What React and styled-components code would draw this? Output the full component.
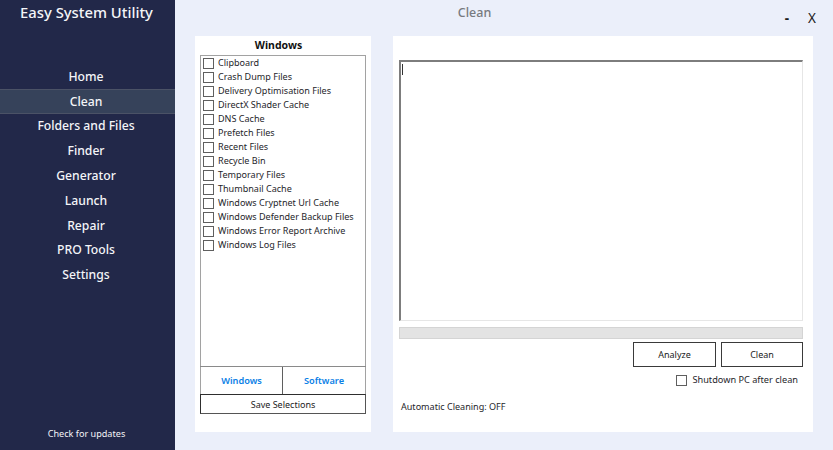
import React from 'react';
import styled, { createGlobalStyle } from 'styled-components';

const GlobalStyle = createGlobalStyle`
  html, body {
    margin: 0;
    padding: 0;
    overflow: hidden;
  }
  * {
    box-sizing: border-box;
  }
`;

const Window = styled.div`
  width: 833px;
  height: 450px;
  display: flex;
  background: #ebeffa;
  font-family: "Noto Sans", "Open Sans", sans-serif;
  color: #222;
`;

const Sidebar = styled.aside`
  width: 175px;
  height: 100%;
  flex: none;
  display: flex;
  flex-direction: column;
  background: #222849;
  color: #f4f5f8;
`;

const Brand = styled.div`
  height: 64px;
  padding: 1px 2px 0 0;
  text-align: center;
  font-size: 14.8px;
  font-weight: 500;
  line-height: 23px;
`;

const Nav = styled.nav`
  display: flex;
  flex-direction: column;
`;

const NavItem = styled.div`
  height: 24.8px;
  padding-right: 3px;
  display: flex;
  align-items: center;
  justify-content: center;
  font-size: 12.2px;
  font-weight: 500;
  background: ${(p) => (p.$active ? '#36425a' : 'transparent')};
  box-shadow: ${(p) => (p.$active ? 'inset 0 1px 0 #4b5266, inset 0 -1px 0 #4b5266' : 'none')};
`;

const UpdateLink = styled.div`
  margin-top: auto;
  padding: 0 2px 9px 0;
  text-align: center;
  font-size: 9.1px;
  line-height: 14px;
`;

const Main = styled.main`
  flex: 1;
  display: flex;
  flex-direction: column;
  padding: 0 20px 18px;
`;

const Header = styled.header`
  height: 36px;
  flex: none;
  position: relative;
  text-align: center;
  padding: 4px 59px 0 0;
  font-size: 12.5px;
  font-weight: 500;
  line-height: 18px;
  color: #777a80;
`;

const WindowControls = styled.div`
  position: absolute;
  top: 9px;
  right: -3px;
  display: flex;
  gap: 19px;
  font-size: 13.5px;
  line-height: 18px;
  font-weight: 400;
  color: #1b1b1b;
`;

const Minimize = styled.span`
  font-weight: 700;
`;

const Panels = styled.div`
  flex: 1;
  min-height: 0;
  display: flex;
  gap: 22px;
`;

const ListPanel = styled.section`
  width: 176px;
  flex: none;
  display: flex;
  flex-direction: column;
  padding: 2px 5px 18px;
  background: #fff;
`;

const ListTitle = styled.div`
  height: 17px;
  padding-right: 9px;
  text-align: center;
  font-size: 10.5px;
  line-height: 15px;
  font-weight: 700;
  color: #111;
`;

const ListBox = styled.div`
  flex: 1;
  min-height: 0;
  display: flex;
  flex-direction: column;
  padding: 0 0 0 2px;
  border: 1px solid #a2a2a2;
  border-bottom: none;
`;

const CheckRow = styled.label`
  height: 14px;
  display: flex;
  align-items: center;
  gap: 4px;
  font-size: 9.05px;
  line-height: 14px;
  color: #1e1e2a;
  white-space: nowrap;
`;

const Box = styled.span`
  width: 11px;
  height: 11px;
  flex: none;
  margin-top: 1px;
  border: 1px solid #5f5f5f;
  background: #fff;
`;

const TabRow = styled.div`
  height: 28px;
  flex: none;
  display: flex;
  border-top: 1px solid #8a8a8a;
`;

const TabButton = styled.div`
  width: ${(p) => p.$width}px;
  display: flex;
  align-items: center;
  justify-content: center;
  font-size: 9.2px;
  font-weight: 600;
  color: #0a80e6;
  border-left: 1px solid #a2a2a2;
  border-right: 1px solid ${(p) => (p.$first ? '#5f5f5f' : '#a2a2a2')};
  & + & {
    border-left: none;
  }
`;

const SaveButton = styled.div`
  height: 20px;
  flex: none;
  display: flex;
  align-items: center;
  justify-content: center;
  font-size: 9px;
  color: #1b1b1b;
  border: 1px solid #2e2e2e;
  border-right-color: #555;
  border-bottom-color: #555;
`;

const OutputPanel = styled.section`
  flex: 1;
  min-width: 0;
  display: flex;
  flex-direction: column;
  padding: 24px 10px 17px 6px;
  background: #fff;
`;

const OutputBox = styled.div`
  height: 261px;
  flex: none;
  padding: 2px 0 0 1px;
  border-top: 2px solid #7d7d7d;
  border-left: 2px solid #7d7d7d;
  border-right: 1px solid #e6e6e6;
  border-bottom: 1px solid #e6e6e6;
`;

const Caret = styled.div`
  width: 1px;
  height: 11px;
  background: #333;
`;

const Progress = styled.div`
  height: 12px;
  flex: none;
  margin-top: 6px;
  background: #e3e3e3;
  border: 1px solid #d4d4d4;
`;

const ActionRow = styled.div`
  display: flex;
  justify-content: flex-end;
  gap: 5px;
  margin-top: 3px;
`;

const ActionButton = styled.div`
  width: ${(p) => p.$width}px;
  height: 25px;
  display: flex;
  align-items: center;
  justify-content: center;
  font-size: 9px;
  color: #1b1b1b;
  border: 1px solid #3a3a3a;
  border-right-width: 1.5px;
  border-bottom-width: 1.5px;
`;

const ShutdownRow = styled(CheckRow)`
  justify-content: flex-end;
  padding-right: 5px;
  margin-top: 5px;
  height: 15px;
  gap: 5px;
  font-size: 9.2px;
`;

const StatusLine = styled.div`
  margin-top: 13px;
  padding-left: 2px;
  font-size: 9.05px;
  line-height: 14px;
  color: #1e1e2a;
`;

const navItems = ['Home', 'Clean', 'Folders and Files', 'Finder', 'Generator', 'Launch', 'Repair', 'PRO Tools', 'Settings'];

const cleanItems = [
  'Clipboard',
  'Crash Dump Files',
  'Delivery Optimisation Files',
  'DirectX Shader Cache',
  'DNS Cache',
  'Prefetch Files',
  'Recent Files',
  'Recycle Bin',
  'Temporary Files',
  'Thumbnail Cache',
  'Windows Cryptnet Url Cache',
  'Windows Defender Backup Files',
  'Windows Error Report Archive',
  'Windows Log Files',
];

const App = () => {
  return (
    <Window>
      <GlobalStyle />
      <Sidebar>
        <Brand>Easy System Utility</Brand>
        <Nav>
          {navItems.map((item) => (
            <NavItem key={item} $active={item === 'Clean'}>{item}</NavItem>
          ))}
        </Nav>
        <UpdateLink>Check for updates</UpdateLink>
      </Sidebar>

      <Main>
        <Header>
          Clean
          <WindowControls>
            <Minimize>-</Minimize>
            <span>X</span>
          </WindowControls>
        </Header>

        <Panels>
          <ListPanel>
            <ListTitle>Windows</ListTitle>
            <ListBox>
              {cleanItems.map((item) => (
                <CheckRow key={item}>
                  <Box />
                  {item}
                </CheckRow>
              ))}
            </ListBox>
            <TabRow>
              <TabButton $first $width={83}>Windows</TabButton>
              <TabButton $width={83}>Software</TabButton>
            </TabRow>
            <SaveButton>Save Selections</SaveButton>
          </ListPanel>

          <OutputPanel>
            <OutputBox>
              <Caret />
            </OutputBox>
            <Progress />
            <ActionRow>
              <ActionButton $width={83}>Analyze</ActionButton>
              <ActionButton $width={82}>Clean</ActionButton>
            </ActionRow>
            <ShutdownRow>
              <Box />
              Shutdown PC after clean
            </ShutdownRow>
            <StatusLine>Automatic Cleaning: OFF</StatusLine>
          </OutputPanel>
        </Panels>
      </Main>
    </Window>
  );
};

export default App;
